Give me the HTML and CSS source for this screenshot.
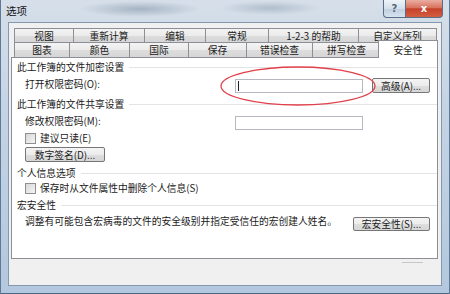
FILE: index.html
```html
<!DOCTYPE html>
<html lang="zh-CN">

<head>
    <meta charset="UTF-8">
    <meta name="viewport" content="width=device-width, initial-scale=1.0">
    <title>选项</title>
    <link rel="stylesheet" href="styles.css">
</head>

<body>
    <div class="window">
        <!-- Title bar -->
        <div class="titlebar">
            <span class="title">选项</span>
            <div class="caption-btns">
                <div class="cap-btn help">?</div>
                <div class="cap-btn close">x</div>
            </div>
        </div>

        <div class="frame">
            <div class="client">
                <!-- Tabs -->
                <div class="tabs">
                    <div class="tab-row row-back">
                        <div class="tab">视图</div>
                        <div class="tab">重新计算</div>
                        <div class="tab">编辑</div>
                        <div class="tab">常规</div>
                        <div class="tab">1-2-3 的帮助</div>
                        <div class="tab">自定义序列</div>
                    </div>
                    <div class="tab-row row-front">
                        <div class="tab">图表</div>
                        <div class="tab">颜色</div>
                        <div class="tab">国际</div>
                        <div class="tab">保存</div>
                        <div class="tab">错误检查</div>
                        <div class="tab">拼写检查</div>
                        <div class="tab selected">安全性</div>
                    </div>
                </div>

                <!-- Security page -->
                <div class="panel">
                    <div class="group-title">此工作簿的文件加密设置</div>
                    <div class="field-row">
                        <span class="label">打开权限密码(O):</span>
                        <div class="textbox"><span class="caret"></span></div>
                        <div class="btn">高级(A)...</div>
                    </div>

                    <div class="group-title">此工作簿的文件共享设置</div>
                    <div class="field-row">
                        <span class="label">修改权限密码(M):</span>
                        <div class="textbox"></div>
                    </div>
                    <div class="check-row"><span class="checkbox"></span>建议只读(E)</div>
                    <div class="btn btn-sign">数字签名(D)...</div>

                    <div class="group-title">个人信息选项</div>
                    <div class="check-row check-privacy"><span class="checkbox"></span>保存时从文件属性中删除个人信息(S)</div>

                    <div class="group-title">宏安全性</div>
                    <div class="macro-row">
                        <span class="macro-text">调整有可能包含宏病毒的文件的安全级别并指定受信任的宏创建人姓名。</span>
                        <div class="btn btn-macro">宏安全性(S)...</div>
                    </div>
                </div>

                <div class="footer"><span class="grip"></span></div>
            </div>
        </div>

        <!-- red annotation ring -->
        <svg class="highlight" width="450" height="294" viewBox="0 0 450 294">
            <ellipse cx="298" cy="86" rx="77" ry="19" fill="none" stroke="#e0404a" stroke-width="1.3" />
        </svg>
    </div>
</body>

</html>
```

FILE: styles.css
```css
* {
    margin: 0;
    padding: 0;
    box-sizing: border-box;
}

body {
    font-family: "Noto Sans CJK SC", "Noto Sans", sans-serif;
    font-size: 9.75px;
    color: #1a1a1a;
    overflow: hidden;
}

.window {
    position: relative;
    width: 450px;
    height: 294px;
    display: flex;
    flex-direction: column;
    background:
        radial-gradient(ellipse 60px 8px at 140px 9px, rgba(110, 128, 150, 0.45), transparent),
        radial-gradient(ellipse 50px 7px at 270px 8px, rgba(110, 128, 150, 0.35), transparent),
        linear-gradient(180deg, #d6dfe9 0%, #c3d3e4 40%, #b3c8de 100%);
    box-shadow: inset 1px 0 #5f7a98, inset -1px 0 #5f7a98, inset 0 -1px #4d6684;
}

/* Title bar */
.titlebar {
    height: 22px;
    display: flex;
    align-items: flex-start;
}

.title {
    padding: 5px 0 0 6px;
    font-size: 10.5px;
    line-height: 12px;
    color: #111;
}

.caption-btns {
    margin-left: auto;
    margin-right: 7px;
    display: flex;
}

.cap-btn {
    height: 18px;
    border: 1px solid #5a6d86;
    border-top: none;
    display: flex;
    align-items: center;
    justify-content: center;
    font-family: "DejaVu Sans", sans-serif;
    font-size: 10px;
    font-weight: bold;
}

.help {
    width: 23px;
    border-radius: 0 0 0 4px;
    color: #56677e;
    background: linear-gradient(180deg, #eef3f8 0%, #d5e0ec 50%, #c0cfdf 51%, #d6e2ee 100%);
}

.close {
    width: 37px;
    border-left: none;
    border-radius: 0 0 4px 0;
    color: #fff;
    background: linear-gradient(180deg, #eaaea2 0%, #d9735f 45%, #c5412b 52%, #d45e40 100%);
}

/* Client area */
.frame {
    flex: 1;
    display: flex;
    padding: 0 8px 8px;
}

.client {
    flex: 1;
    min-width: 0;
    display: flex;
    flex-direction: column;
    border: 1px solid #8497ad;
    background-color: #f0f0f0;
}

/* Tabs */
.tabs {
    position: relative;
    z-index: 2;
    margin: 5px 0 0 5px;
    width: 423px;
}

.tab-row {
    display: grid;
}

.row-back {
    height: 14px;
    grid-template-columns: 59px 71px 61px 63px 90px 79px;
}

.row-front {
    height: 15px;
    grid-template-columns: 55px 60px 59px 58px 66px 68px 57px;
}

.tab {
    border-left: 1px solid #8c8f98;
    border-top: 1px solid #8c8f98;
    background: linear-gradient(180deg, #f3f3f3 0%, #ebebeb 50%, #dddddd 51%, #d6d6d6 100%);
    display: flex;
    align-items: center;
    justify-content: center;
    line-height: 12px;
    white-space: nowrap;
}

.tab:last-child {
    border-right: 1px solid #8c8f98;
}

.tab.selected {
    margin: -2px -1px -1px -2px;
    background: #fff;
    border: 1px solid #8c8f98;
    border-bottom: none;
}

/* Page */
.panel {
    height: 202px;
    margin: 0 3px 0 2px;
    padding: 3px 0 0 5px;
    background-color: #fff;
    border: 1px solid #8c8f98;
}

.group-title {
    height: 12px;
    line-height: 12px;
    display: flex;
    align-items: center;
    gap: 5px;
    margin-top: 5px;
    white-space: nowrap;
}

.group-title:first-child {
    margin-top: 0;
}

.group-title::after {
    content: "";
    flex: 1;
    height: 1px;
    background-color: #e4e4e4;
}

.field-row {
    display: grid;
    grid-template-columns: 201px 128px 58px;
    column-gap: 9px;
    align-items: center;
    height: 15px;
    margin: 5px 0 0 8px;
}

.label {
    line-height: 12px;
    margin-top: -3px;
}

.textbox {
    height: 14px;
    border: 1px solid #b5b8be;
    background-color: #fff;
    display: flex;
    align-items: center;
    padding-left: 2px;
}

.caret {
    width: 1px;
    height: 10px;
    background-color: #222;
}

.btn {
    height: 15px;
    border: 1px solid #767676;
    border-radius: 2px;
    background: linear-gradient(180deg, #f4f4f4 0%, #ececec 50%, #dedede 51%, #d6d6d6 100%);
    display: flex;
    align-items: center;
    justify-content: center;
    line-height: 12px;
    white-space: nowrap;
}

.check-row {
    height: 12px;
    line-height: 12px;
    display: flex;
    align-items: center;
    gap: 4px;
    margin: 2px 0 0 8px;
}

.check-privacy {
    margin-top: 3px;
}

.checkbox {
    width: 11px;
    height: 11px;
    border: 1px solid #8f8f8f;
    background: linear-gradient(135deg, #d8d8d8 0%, #f4f4f4 100%);
}

.btn-sign {
    width: 80px;
    margin: 3px 0 0 8px;
}

.macro-row {
    display: flex;
    justify-content: space-between;
    margin: 6px 7px 0 8px;
}

.macro-text {
    line-height: 12px;
    margin-top: -2px;
}

.btn-macro {
    width: 77px;
    height: 14px;
}

.footer {
    display: flex;
    justify-content: flex-end;
    padding: 3px 18px 0 0;
}

.grip {
    width: 21px;
    height: 1px;
    background-color: #c6c6c6;
}

/* annotation over the dialog */
.highlight {
    position: absolute;
    left: 0;
    top: 0;
    pointer-events: none;
}
```
